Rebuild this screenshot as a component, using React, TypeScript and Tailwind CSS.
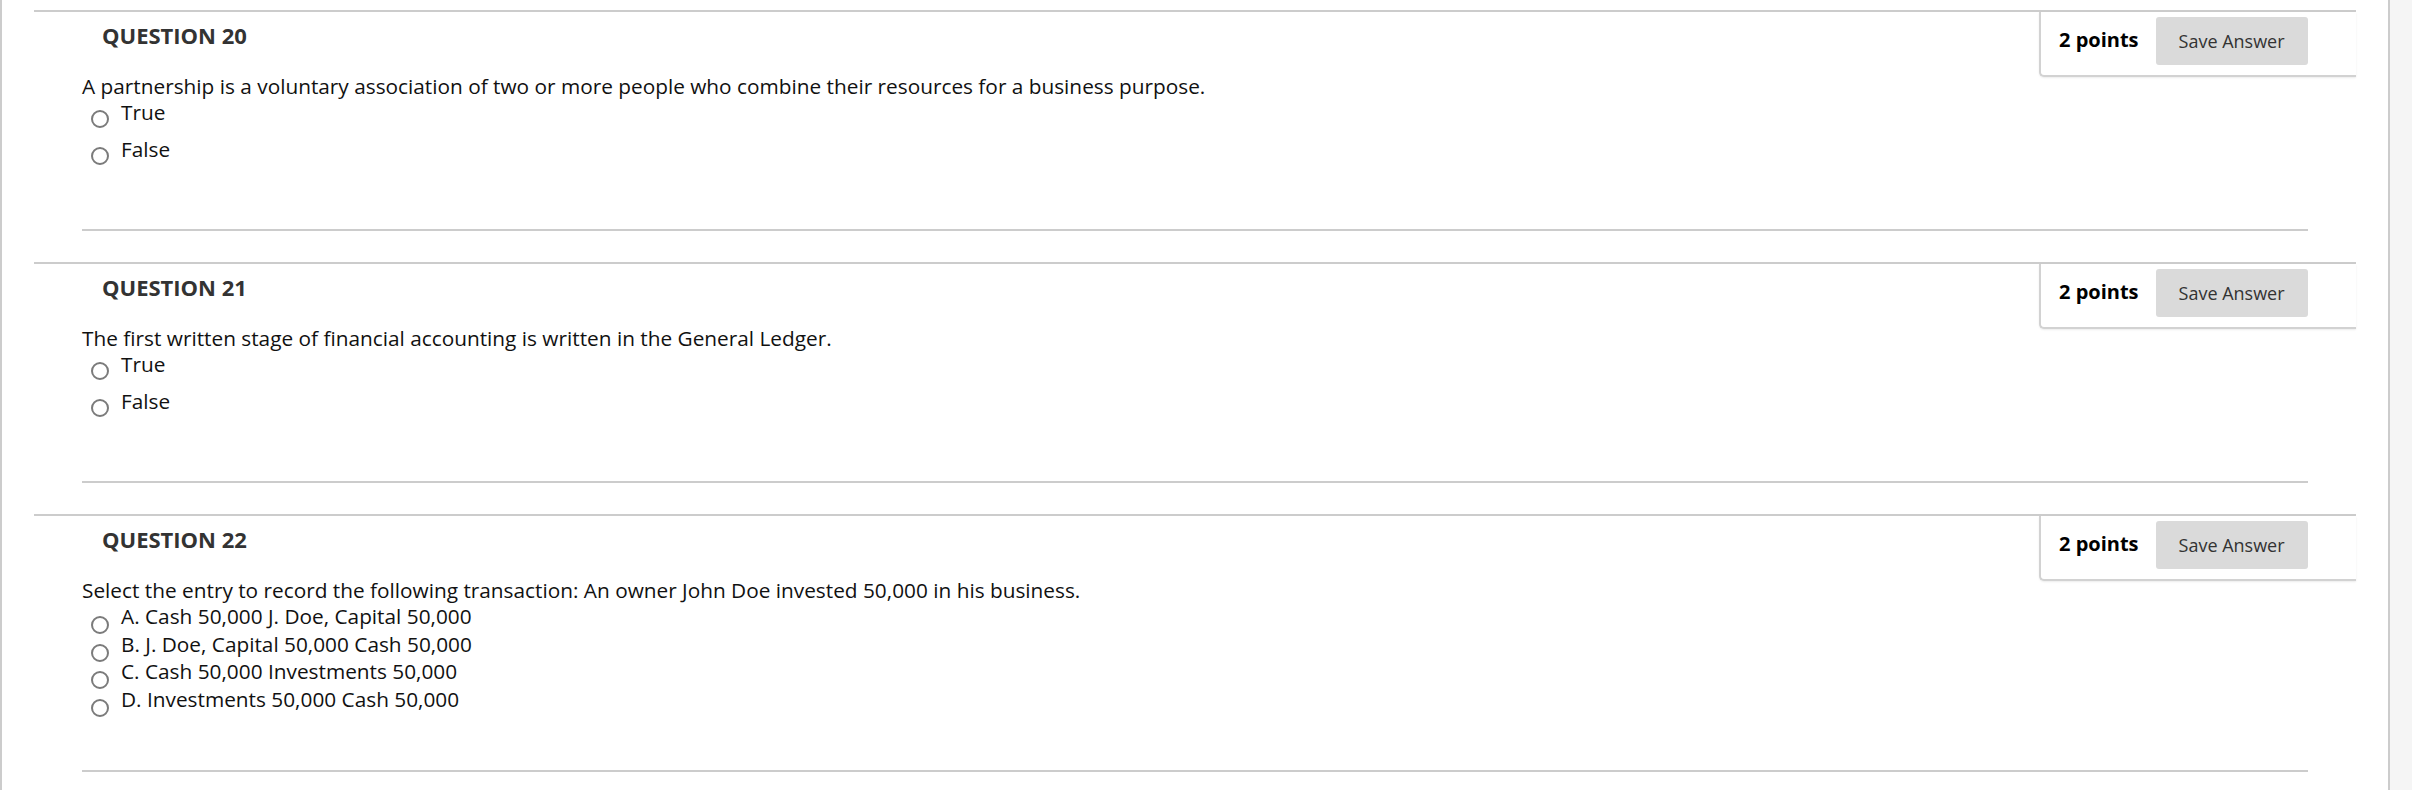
import React from 'react';

type Question = {
  num: number;
  text: string;
  kind: 'tf' | 'mc';
  options: string[];
};

const questions: Question[] = [
  {
    num: 20,
    text: 'A partnership is a voluntary association of two or more people who combine their resources for a business purpose.',
    kind: 'tf',
    options: ['True', 'False'],
  },
  {
    num: 21,
    text: 'The first written stage of financial accounting is written in the General Ledger.',
    kind: 'tf',
    options: ['True', 'False'],
  },
  {
    num: 22,
    text: 'Select the entry to record the following transaction: An owner John Doe invested 50,000 in his business.',
    kind: 'mc',
    options: [
      'A. Cash 50,000 J. Doe, Capital 50,000',
      'B. J. Doe, Capital 50,000 Cash 50,000',
      'C. Cash 50,000 Investments 50,000',
      'D. Investments 50,000 Cash 50,000',
    ],
  },
];

function Radio({ tf }: { tf: boolean }) {
  // offset only, so the circle doesn't stretch the row
  return (
    <span
      className={
        tf
          ? 'relative top-[11px] ml-[57px] mr-[12px] w-[18px] h-[18px] shrink-0 rounded-full border-2 border-[#7b7b7b] bg-white'
          : 'relative top-[13px] ml-[57px] mr-[12px] w-[18px] h-[18px] shrink-0 rounded-full border-2 border-[#7b7b7b] bg-white'
      }
    />
  );
}

function QuestionBlock({ q }: { q: Question }) {
  const tf = q.kind === 'tf';
  return (
    <section className="border-t-2 border-[#cccccc] mb-[31px]">
      <div className="flex">
        <div className="flex-1">
          <h2 className="pl-[68px] pt-[8px] text-[22px] leading-[30px] font-bold text-[#333333]">
            QUESTION {q.num}
          </h2>
          <p className="mt-[23px] pl-[48px] text-[20.8px] leading-[26px] text-[#111111]">{q.text}</p>
          <div className={tf ? 'flex flex-col gap-[11px] pb-[67px]' : 'flex flex-col pb-[56px]'}>
            {q.options.map((o) => (
              <label
                key={o}
                className={
                  tf
                    ? 'flex items-start h-[26px] text-[20.8px] leading-[26px] text-[#111111]'
                    : 'flex items-start h-[27.7px] text-[20.8px] leading-[27.7px] text-[#111111]'
                }
              >
                <Radio tf={tf} />
                <span>{o}</span>
              </label>
            ))}
          </div>
        </div>
        <div className="self-start w-[317px] h-[65px] flex items-start pt-[5px] pl-[18px] gap-[17px] bg-white border-l-2 border-b-2 border-[#d2d2d2] rounded-bl-[5px] shadow-[0_1px_2px_rgba(0,0,0,0.08)]">
          <span className="text-[20px] leading-[46px] font-bold text-[#000000]">2 points</span>
          <button className="w-[152px] h-[48px] rounded-[3px] bg-[#dadada] text-[18px] text-[#333333]">
            Save Answer
          </button>
        </div>
      </div>
      <div className="mx-[48px] h-[2px] bg-[#cccccc]" />
    </section>
  );
}

export default function App() {
  return (
    <div
      className="flex h-[790px] overflow-hidden bg-white"
      style={{ fontFamily: '"Open Sans", "Noto Sans", sans-serif' }}
    >
      <div className="w-[2px] bg-[#cccccc]" />
      <div className="flex-1 px-[32px] pt-[10px]">
        {questions.map((q) => (
          <QuestionBlock key={q.num} q={q} />
        ))}
      </div>
      <div className="w-[2px] bg-[#cccccc]" />
      <div className="w-[22px] bg-[#f5f5f5]" />
    </div>
  );
}
